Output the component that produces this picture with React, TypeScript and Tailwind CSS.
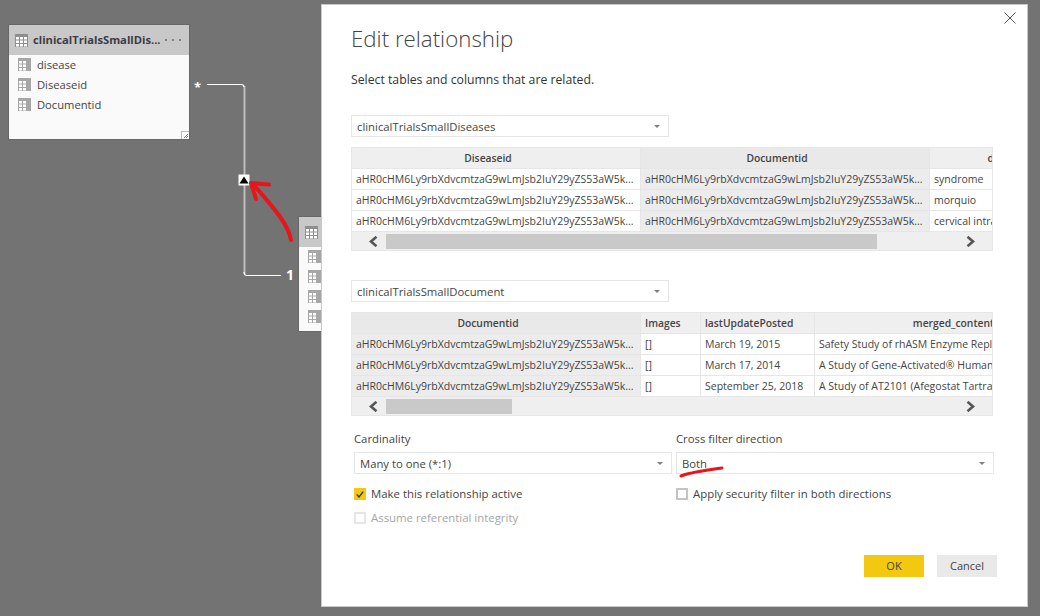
import React from "react";

const font = { fontFamily: '"Open Sans", "Noto Sans", sans-serif' };
const id = "aHR0cHM6Ly9rbXdvcmtzaG9wLmJsb2IuY29yZS53aW5k...";

function GridIcon({ size = 13, header = false }: { size?: number; header?: boolean }) {
  if (header) {
    return (
      <svg width="13" height="13" viewBox="0 0 13 13" className="shrink-0">
        <rect width="13" height="13" fill="#8e8e8e" />
        {[1, 5, 9].map((x) =>
          [3, 6.5, 10].map((y) => <rect key={`${x}-${y}`} x={x} y={y} width="3" height="2.5" fill="#fff" />)
        )}
      </svg>
    );
  }
  return (
    <svg width={size} height={size} viewBox="0 0 13 13" className="shrink-0">
      <rect width="13" height="13" fill="#a6a6a6" />
      {[1, 5].map((x) =>
        [3, 6.5, 10].map((y) => <rect key={`${x}-${y}`} x={x} y={y} width="3" height="2.5" fill="#fff" />)
      )}
    </svg>
  );
}

function Select({ label, className }: { label: string; className: string }) {
  return (
    <div className={`flex h-[22px] items-center justify-between border border-[#e6e6e6] bg-white pl-[5px] pr-[8px] text-[11.3px] text-[#444] ${className}`}>
      <span className="pt-[2px]">{label}</span>
      <span className="h-0 w-0 border-x-[3px] border-t-[3px] border-x-transparent border-t-[#808080]" />
    </div>
  );
}

function Chevron({ dir }: { dir: "l" | "r" }) {
  return (
    <svg width="10" height="11" viewBox="0 0 10 11">
      <path d={dir === "l" ? "M8.5 0.8 L3 5.5 L8.5 10.2" : "M1.5 0.8 L7 5.5 L1.5 10.2"} fill="none" stroke="#555" strokeWidth="2.6" />
    </svg>
  );
}

function DataTable({
  cols,
  headers,
  rows,
  shaded,
  thumbWidth,
}: {
  cols: string;
  headers: { t: string; kind?: "center" | "start" | "end" }[];
  rows: string[][];
  shaded: number;
  thumbWidth: string;
}) {
  return (
    <div className="mt-[10px] w-[642px] border border-[#e6e6e6] bg-[#e6e6e6] text-[10.5px] text-[#444]">
      <div className={`grid gap-x-px ${cols} overflow-hidden`}>
        {headers.map((h, i) => {
          const kind = h.kind ?? "center";
          const place =
            kind === "center"
              ? "justify-center pr-[16px]"
              : kind === "start"
                ? "justify-start pl-[4px]"
                : "justify-end";
          return (
            <div
              key={i}
              className={`flex h-[20px] items-center overflow-hidden whitespace-nowrap pt-[2px] text-[10.3px] font-semibold ${place} ${i === shaded ? "bg-[#e9e9e9]" : "bg-[#efefef]"}`}
            >
              {h.t}
            </div>
          );
        })}
        {rows.map((r, ri) =>
          r.map((c, ci) => (
            <div
              key={`${ri}-${ci}`}
              className={`mt-px flex h-[20px] items-center overflow-hidden whitespace-nowrap pl-[4px] pt-[2px] ${ci === shaded ? "bg-[#ececec]" : "bg-white"}`}
            >
              {c}
            </div>
          ))
        )}
      </div>
      <div className="mt-px flex h-[18px] items-center bg-[#efefef]">
        <div className="flex w-[34px] shrink-0 pl-[16px]">
          <Chevron dir="l" />
        </div>
        <div className="flex h-[15px] flex-1 items-center">
          <div className={`h-[15px] bg-[#c9c9c9] ${thumbWidth}`} />
        </div>
        <div className="flex w-[34px] shrink-0 pl-[8px]">
          <Chevron dir="r" />
        </div>
      </div>
    </div>
  );
}

function Check({ on, muted, label }: { on?: boolean; muted?: boolean; label: string }) {
  return (
    <div className="flex h-[14px] items-center gap-[5px]">
      <span
        className={`flex h-[12px] w-[12px] items-center justify-center border-2 ${
          on ? "border-[#f2c811] bg-[#f2c811]" : muted ? "border-[#e6e6e6] bg-white" : "border-[#c4c4c4] bg-white"
        }`}
      >
        {on && (
          <svg width="10" height="9" viewBox="0 0 10 9">
            <path d="M1 4.5 L3.8 7.5 L9 1" fill="none" stroke="#333" strokeWidth="1.7" />
          </svg>
        )}
      </span>
      <span className={`text-[11.4px] ${muted ? "text-[#a6a6a6]" : "text-[#444]"}`}>{label}</span>
    </div>
  );
}

export default function App() {
  return (
    <div className="relative h-[616px] w-[1040px] overflow-hidden bg-[#737373]" style={font}>
      {/* diagram card 1 */}
      <div className="absolute left-[8px] top-[24px] h-[116px] w-[182px] border border-[#666] bg-[#fafafa]">
        <div className="flex h-[30px] items-center bg-[#c8c8c8] pl-[6px]">
          <GridIcon header />
          <span className="ml-[5px] w-[128px] whitespace-nowrap text-[11.2px] font-bold text-[#3c3c46]">clinicalTrialsSmallDis...</span>
          <span className="ml-[4px] flex gap-[5px]">
            <i className="h-[2px] w-[2px] bg-[#808080]" />
            <i className="h-[2px] w-[2px] bg-[#808080]" />
            <i className="h-[2px] w-[2px] bg-[#808080]" />
          </span>
        </div>
        <div className="flex flex-col gap-[7px] pl-[9px] pt-[3px] text-[11.2px] leading-[13px] text-[#444]">
          <div className="flex h-[13px] items-center gap-[6px]"><GridIcon />disease</div>
          <div className="flex h-[13px] items-center gap-[6px]"><GridIcon />Diseaseid</div>
          <div className="flex h-[13px] items-center gap-[6px]"><GridIcon />Documentid</div>
        </div>
        <div className="absolute bottom-0 right-0 flex h-[8px] w-[8px] items-end justify-end border-l border-t border-[#bbb]">
          <svg width="6" height="6" viewBox="0 0 6 6"><path d="M1 5 L5 1 M3 5 L5 3" stroke="#555" strokeWidth="0.8" /></svg>
        </div>
      </div>

      {/* diagram card 2, runs under the dialog */}
      <div className="absolute left-[298px] top-[216px] h-[116px] w-[60px] border border-[#666] bg-[#fafafa]">
        <div className="flex h-[30px] items-center bg-[#c8c8c8] pl-[6px]"><GridIcon header /></div>
        <div className="flex flex-col gap-[7px] pl-[9px] pt-[3px]">
          <GridIcon /><GridIcon /><GridIcon /><GridIcon />
        </div>
      </div>

      {/* relationship line */}
      <svg className="absolute left-0 top-0" width="322" height="340" viewBox="0 0 322 340">
        <path d="M244.5 86 V274" fill="none" stroke="#bdbdbd" strokeWidth="2" />
        <path d="M207 84.5 H241 Q244 84.5 244 87" fill="none" stroke="#fff" strokeWidth="1.2" />
        <path d="M244 272 Q244 275.5 247 275.5 H281" fill="none" stroke="#fff" strokeWidth="1.2" />
        <rect x="238.5" y="174.5" width="11" height="11" fill="#fff" />
        <path d="M244 176.5 L248.5 183.5 H239.5 Z" fill="#000" />
        <path
          d="M291 240 C289 226 276 210 253 184 M251 183 L269 184.5 M251 183 L256 199"
          fill="none"
          stroke="#e8151b"
          strokeWidth="4"
          strokeLinecap="round"
        />
      </svg>
      <span className="absolute left-[194px] top-[78px] text-[13px] font-bold leading-[18px] text-white">*</span>
      <span className="absolute left-[286px] top-[266px] text-[14px] font-bold leading-[18px] text-white">1</span>

      {/* dialog */}
      <div className="absolute left-[321px] top-[4px] h-[603px] w-[707px] border border-[#c8c8c8] bg-white pl-[29px]">
        <svg className="absolute right-[11px] top-[7px]" width="12" height="12" viewBox="0 0 12 12">
          <path d="M0.5 0.5 L11.5 11.5 M11.5 0.5 L0.5 11.5" stroke="#555" strokeWidth="1" />
        </svg>

        <h1 className="pt-[18px] text-[22.3px] font-light leading-[32px] text-[#444]">Edit relationship</h1>
        <p className="mt-[16px] text-[12.25px] leading-[18px] text-[#333]">Select tables and columns that are related.</p>

        <Select label="clinicalTrialsSmallDiseases" className="mt-[26px] w-[318px]" />
        <DataTable
          cols="grid-cols-[288px_288px_64px]"
          shaded={1}
          thumbWidth="w-[491px]"
          headers={[{ t: "Diseaseid" }, { t: "Documentid" }, { t: "d", kind: "end" }]}
          rows={[
            [id, id, "syndrome"],
            [id, id, "morquio"],
            [id, id, "cervical intra"],
          ]}
        />

        <Select label="clinicalTrialsSmallDocument" className="mt-[29px] w-[318px]" />
        <DataTable
          cols="grid-cols-[288px_59px_113px_179px]"
          shaded={0}
          thumbWidth="w-[126px]"
          headers={[
            { t: "Documentid" },
            { t: "Images", kind: "start" },
            { t: "lastUpdatePosted", kind: "start" },
            { t: "merged_content", kind: "end" },
          ]}
          rows={[
            [id, "[]", "March 19, 2015", "Safety Study of rhASM Enzyme Replacement"],
            [id, "[]", "March 17, 2014", "A Study of Gene-Activated® Human Glucocer"],
            [id, "[]", "September 25, 2018", "A Study of AT2101 (Afegostat Tartrate) in"],
          ]}
        />

        <div className="ml-[3px] mt-[15px] flex w-[640px] gap-[4px]">
          <div className="w-[318px]">
            <div className="text-[11.3px] leading-[16px] text-[#444]">Cardinality</div>
            <Select label="Many to one (*:1)" className="mt-[5px]" />
            <div className="mt-[13px] flex flex-col gap-[10px]">
              <Check on label="Make this relationship active" />
              <Check muted label="Assume referential integrity" />
            </div>
          </div>
          <div className="relative w-[318px]">
            <div className="text-[11.3px] leading-[16px] text-[#444]">Cross filter direction</div>
            <Select label="Both" className="mt-[5px]" />
            <div className="mt-[13px]">
              <Check label="Apply security filter in both directions" />
            </div>
            <svg className="absolute left-[1px] top-[34px]" width="50" height="14" viewBox="0 0 50 14">
              <path d="M4 11 C14 7 30 5 45 3" fill="none" stroke="#e8151b" strokeWidth="3" strokeLinecap="round" />
            </svg>
          </div>
        </div>

        <div className="absolute bottom-[29px] right-[30px] flex gap-[13px] text-[11px] text-[#444]">
          <div className="flex h-[22px] w-[60px] items-center justify-center bg-[#f2c811]">OK</div>
          <div className="flex h-[22px] w-[60px] items-center justify-center bg-[#e9e9e9]">Cancel</div>
        </div>
      </div>
    </div>
  );
}
